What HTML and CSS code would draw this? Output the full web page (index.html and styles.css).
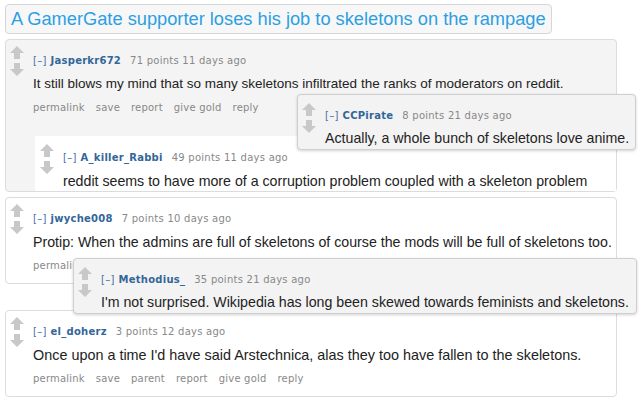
FILE: index.html
```html
<!DOCTYPE html>
<html lang="en">
<head>
    <meta charset="UTF-8">
    <title>A GamerGate supporter loses his job to skeletons on the rampage</title>
    <link rel="stylesheet" href="styles.css">
</head>
<body>
    <div class="page">
        <div class="title">A GamerGate supporter loses his job to skeletons on the rampage</div>

        <!-- first thread, with a nested reply and a popped-out reply -->
        <div class="thread">
            <div class="comment shaded">
                <svg class="arrows" width="14" height="30" viewBox="0 0 14 30"><path d="M7 0L14 7H10V13H4V7H0Z"/><path d="M4 17H10V23H14L7 30L0 23H4Z"/></svg>
                <div class="entry">
                    <p class="tagline"><span class="toggle">[–]</span><span class="author">Jasperkr672</span>71 points 11 days ago</p>
                    <p class="text small">It still blows my mind that so many skeletons infiltrated the ranks of moderators on reddit.</p>
                    <ul class="links">
                        <li>permalink</li><li>save</li><li>report</li><li>give gold</li><li>reply</li>
                    </ul>
                    <div class="comment child">
                        <svg class="arrows" width="14" height="30" viewBox="0 0 14 30"><path d="M7 0L14 7H10V13H4V7H0Z"/><path d="M4 17H10V23H14L7 30L0 23H4Z"/></svg>
                        <div class="entry">
                            <p class="tagline"><span class="toggle">[–]</span><span class="author">A_killer_Rabbi</span>49 points 11 days ago</p>
                            <p class="text">reddit seems to have more of a corruption problem coupled with a skeleton problem</p>
                        </div>
                    </div>
                </div>
            </div>
            <div class="comment popup popup-pirate">
                <svg class="arrows" width="14" height="30" viewBox="0 0 14 30"><path d="M7 0L14 7H10V13H4V7H0Z"/><path d="M4 17H10V23H14L7 30L0 23H4Z"/></svg>
                <div class="entry">
                    <p class="tagline"><span class="toggle">[–]</span><span class="author">CCPirate</span>8 points 21 days ago</p>
                    <p class="text">Actually, a whole bunch of skeletons love anime.</p>
                </div>
            </div>
        </div>

        <div class="thread">
            <div class="comment">
                <svg class="arrows" width="14" height="30" viewBox="0 0 14 30"><path d="M7 0L14 7H10V13H4V7H0Z"/><path d="M4 17H10V23H14L7 30L0 23H4Z"/></svg>
                <div class="entry">
                    <p class="tagline"><span class="toggle">[–]</span><span class="author">jwyche008</span>7 points 10 days ago</p>
                    <p class="text">Protip: When the admins are full of skeletons of course the mods will be full of skeletons too.</p>
                    <ul class="links">
                        <li>permalink</li><li>save</li><li>parent</li><li>report</li><li>give gold</li><li>reply</li>
                    </ul>
                </div>
            </div>
            <div class="comment popup popup-methodius">
                <svg class="arrows" width="14" height="30" viewBox="0 0 14 30"><path d="M7 0L14 7H10V13H4V7H0Z"/><path d="M4 17H10V23H14L7 30L0 23H4Z"/></svg>
                <div class="entry">
                    <p class="tagline"><span class="toggle">[–]</span><span class="author">Methodius_</span>35 points 21 days ago</p>
                    <p class="text">I'm not surprised. Wikipedia has long been skewed towards feminists and skeletons.</p>
                </div>
            </div>
        </div>

        <div class="thread spaced">
            <div class="comment">
                <svg class="arrows" width="14" height="30" viewBox="0 0 14 30"><path d="M7 0L14 7H10V13H4V7H0Z"/><path d="M4 17H10V23H14L7 30L0 23H4Z"/></svg>
                <div class="entry">
                    <p class="tagline"><span class="toggle">[–]</span><span class="author">el_doherz</span>3 points 12 days ago</p>
                    <p class="text large">Once upon a time I'd have said Arstechnica, alas they too have fallen to the skeletons.</p>
                    <ul class="links">
                        <li>permalink</li><li>save</li><li>parent</li><li>report</li><li>give gold</li><li>reply</li>
                    </ul>
                </div>
            </div>
        </div>
    </div>
</body>
</html>
```

FILE: styles.css
```css
/* General Styles */
body {
    margin: 0;
    background-color: #ffffff;
    font-family: 'Liberation Sans', Arial, sans-serif;
    color: #222;
}

p, ul {
    margin: 0;
    padding: 0;
}

.page {
    padding: 4px 0 0 5px;
    width: 612px;
}

.title {
    display: inline-block;
    background-color: #f7f7f7;
    border: 1px solid #d6d6d6;
    border-radius: 4px;
    padding: 0 5px;
    font-size: 18.25px;
    line-height: 28px;
    color: #2c9fe3;
}

/* Comments */
.thread {
    position: relative;
    margin-top: 5px;
}

.thread.spaced {
    margin-top: 26px;
}

.comment {
    display: flex;
    background-color: #ffffff;
    border: 1px solid #dcdcdc;
    border-radius: 4px;
    padding: 6px 0 10px 4px;
}

.comment.shaded {
    background-color: #f4f4f4;
    padding-bottom: 0;
}

.comment.child {
    border: none;
    border-radius: 0;
    margin: 21px 0 0 2px;
    padding: 8px 0 0 5px;
}

.comment.child .entry {
    padding-top: 7px;
}

.arrows {
    flex: none;
    fill: #c8c8c8;
    margin-right: 9px;
}

.entry {
    flex: 1;
    padding-top: 8px;
    min-width: 0;
}

.tagline {
    font-family: 'DejaVu Sans', Verdana, sans-serif;
    font-size: 10px;
    line-height: 14px;
    letter-spacing: 0.25px;
    color: #888;
    white-space: nowrap;
}

.toggle {
    color: #4a6fa5;
    margin-right: 4px;
}

.author {
    color: #336699;
    font-weight: bold;
    margin-right: 9px;
}

.text {
    font-size: 14.2px;
    line-height: 20px;
    margin-top: 6px;
    white-space: nowrap;
}

.text.small {
    font-size: 13.5px;
}

.text.large {
    font-size: 14.4px;
}

.links {
    list-style: none;
    display: flex;
    gap: 11px;
    margin-top: 7px;
    font-family: 'DejaVu Sans', Verdana, sans-serif;
    font-size: 10px;
    line-height: 14px;
    letter-spacing: 0.2px;
    color: #888;
}

/* Popped-out replies */
.popup {
    position: absolute;
    z-index: 2;
    background-color: #f3f3f3;
    border-color: #cfcfcf;
    box-shadow: 0 1px 3px rgba(0, 0, 0, 0.18);
    padding: 8px 0 1px 4px;
    box-sizing: border-box;
}

.popup .entry {
    padding-top: 6px;
}

.popup .text {
    margin-top: 5px;
}

.popup-pirate {
    left: 292px;
    top: 55px;
    width: 339px;
}

.popup-methodius {
    left: 68px;
    top: 61px;
    width: 564px;
}
```
